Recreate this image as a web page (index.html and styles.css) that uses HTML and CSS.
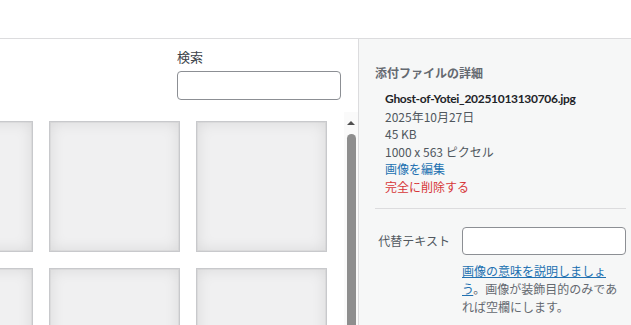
FILE: index.html
```html
<!DOCTYPE html>
<html lang="ja">
<head>
<meta charset="utf-8">
<title>メディアを追加</title>
<link rel="stylesheet" href="styles.css">
</head>
<body>
    <div class="topbar"></div>
    <div class="frame">
        <div class="browser">
            <div class="toolbar">
                <label class="search-label" for="search">検索</label>
                <input class="search-input" id="search" type="search">
            </div>
            <div class="list-wrap">
                <div class="attachments">
                    <div class="tile"></div>
                    <div class="tile"></div>
                    <div class="tile"></div>
                    <div class="tile"></div>
                    <div class="tile"></div>
                    <div class="tile"></div>
                </div>
                <div class="scrollbar">
                    <span class="arrow"></span>
                    <span class="thumb"></span>
                </div>
            </div>
        </div>

        <aside class="sidebar">
            <h2 class="title">添付ファイルの詳細</h2>
            <div class="details">
                <div class="filename">Ghost-of-Yotei_20251013130706.jpg</div>
                <div>2025年10月27日</div>
                <div>45 KB</div>
                <div>1000 x 563 ピクセル</div>
                <a class="edit" href="#">画像を編集</a>
                <a class="delete" href="#">完全に削除する</a>
            </div>
            <div class="field">
                <label class="field-label" for="alt">代替テキスト</label>
                <input class="field-input" id="alt" type="text">
            </div>
            <p class="help"><a href="#">画像の意味を説明しましょう</a>。画像が装飾目的のみであれば空欄にします。</p>
        </aside>
    </div>
</body>
</html>
```

FILE: styles.css
```css
body {
    margin:0;
    font-family:"Noto Sans CJK JP", "Noto Sans", sans-serif;
    font-size:12px;
    color:#3c434a;
    background-color:white;
    overflow:hidden;
}

.topbar {
    height:38px;
    border-bottom:1px solid #dcdcde;
}

.frame {
    display:flex;
    height:286px;
}

.browser {
    width:358px;
    display:flex;
    flex-direction:column;
}

.toolbar {
    display:flex;
    flex-direction:column;
    padding:9px 0 12px 177px;
}

.search-label {
    font-size:13px;
    line-height:18px;
    color:#3c434a;
    margin-bottom:5px;
}

.search-input {
    box-sizing:border-box;
    width:164px;
    height:29px;
    margin:0;
    border:1px solid #8c8f94;
    border-radius:4px;
    background:white;
}

.list-wrap {
    display:flex;
    flex:1;
    overflow:hidden;
}

.attachments {
    flex:1;
    display:grid;
    grid-template-columns:131px 131px 131px;
    grid-auto-rows:131px;
    gap:16px;
    padding-top:9px;
    margin-left:-98px;
}

.tile {
    background:#f0f0f1;
    border:1px solid #c8c9cc;
    box-shadow:inset 0 0 15px rgba(0,0,0,.1), inset 0 0 0 1px rgba(0,0,0,.04);
}

.scrollbar {
    width:14px;
    display:flex;
    flex-direction:column;
    align-items:center;
    background:#fafafa;
}

.arrow {
    margin-top:9px;
    width:0;
    height:0;
    border-left:4px solid transparent;
    border-right:4px solid transparent;
    border-bottom:4px solid #505050;
}

.thumb {
    margin-top:9px;
    width:9px;
    flex:1;
    background:#8e8e8e;
    border-radius:5px 5px 0 0;
}

.sidebar {
    flex:1;
    background:#f6f7f7;
    border-left:1px solid #dcdcde;
    padding:25px 5px 0 16px;
}

.title {
    margin:0;
    font-size:12px;
    line-height:18px;
    font-weight:bold;
    color:#646970;
}

.details {
    display:flex;
    flex-direction:column;
    align-items:flex-start;
    margin:8px 0 0 10px;
    padding-bottom:12px;
    line-height:17.6px;
    color:#50575e;
}

.filename {
    font-family:Lato, "Noto Sans CJK JP", sans-serif;
    font-size:12px;
    font-weight:bold;
    letter-spacing:-0.3px;
    color:#1d2327;
}

.edit {
    color:#2271b1;
    text-decoration:none;
}

.delete {
    color:#d63638;
    text-decoration:none;
}

.field {
    border-top:1px solid #dcdcde;
    padding-top:18px;
    display:flex;
    align-items:center;
}

.field-label {
    width:75px;
    padding-right:12px;
    text-align:right;
    color:#50575e;
}

.field-input {
    box-sizing:border-box;
    width:164px;
    height:28px;
    margin:0;
    border:1px solid #8c8f94;
    border-radius:4px;
    background:white;
}

.help {
    margin:7px 0 0 87px;
    width:164px;
    line-height:18px;
    color:#646970;
}

.help a {
    color:#2271b1;
}
```
